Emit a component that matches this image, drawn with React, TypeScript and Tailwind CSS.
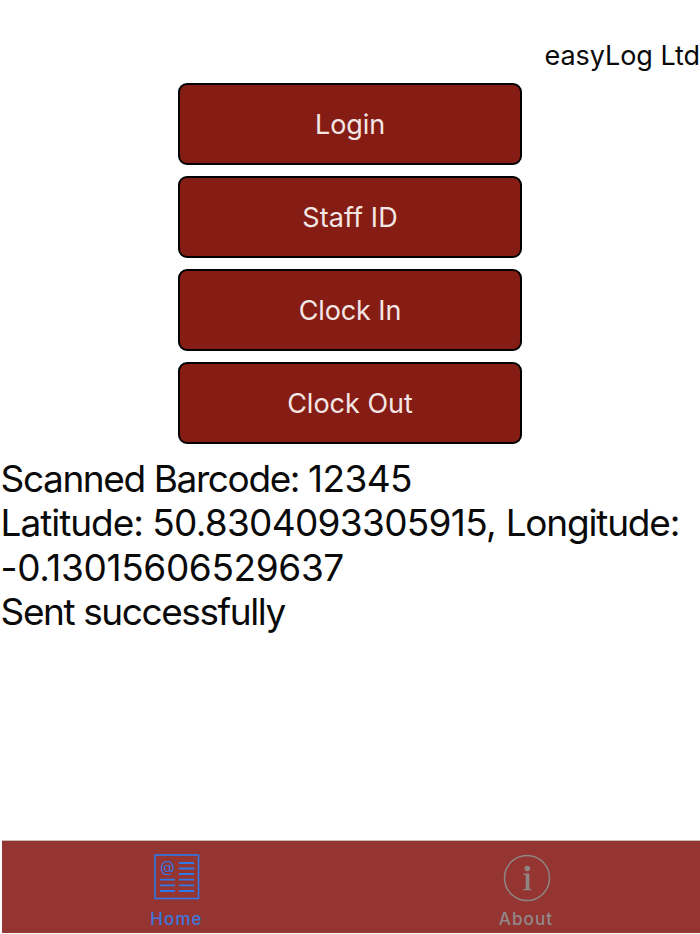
const buttons = [
  { label: 'Login', tracking: 'tracking-[-0.1px]' },
  { label: 'Staff ID', tracking: 'tracking-[0.1px]' },
  { label: 'Clock In', tracking: 'tracking-[-0.1px]' },
  { label: 'Clock Out', tracking: 'tracking-[0px]' },
];

function HomeIcon() {
  return (
    <svg width="46" height="46" viewBox="0 0 46 46" fill="none" stroke="#2f78ea" className="shrink-0">
      <rect x="1" y="1" width="43.5" height="43.5" strokeWidth="1.6" />
      <text x="6.3" y="18" fontSize="15" fill="#2f78ea" stroke="none" className="font-['Inter',sans-serif]">@</text>
      <path
        strokeWidth="1.8"
        d="M25 9h15M25 14.5h15M25 20h15M25 25.7h15M25 31.3h15M25 37h15M6 25.7h15M6 31.3h15M6 37h15"
      />
    </svg>
  );
}

function AboutIcon() {
  return (
    <svg width="48" height="48" viewBox="0 0 48 48" fill="none" className="shrink-0">
      <circle cx="24" cy="24" r="22.5" stroke="#8f8583" strokeWidth="1.5" />
      <circle cx="24.3" cy="14.5" r="2.8" fill="#8f8583" />
      <path d="M20.300 19.500h6v15.200l2.400.5v1.100h-8.600v-1.100l2.600-.5v-13.400l-2.400-.7z" fill="#8f8583" />
    </svg>
  );
}

export default function App() {
  return (
    <div className="flex h-[934px] w-[700px] flex-col overflow-hidden bg-white font-['Inter',sans-serif] text-[#0a0a0a]">
      <header className="flex h-[82px] shrink-0 justify-end pt-[39px] text-[27px] leading-[33px]">
        <span className="whitespace-nowrap tracking-[-0.05px]">easyLog Ltd</span>
      </header>

      <main className="flex grow flex-col">
        <div className="flex flex-col gap-[11.3px] pl-[178px] pt-[0.5px]">
          {buttons.map((b) => (
            <button
              key={b.label}
              className="flex h-[82px] w-[344px] items-center justify-center rounded-[9px] border-2 border-black bg-[#851d14] pt-px text-[27px] leading-[33px] text-[#f3e6e5]"
            >
              <span className={b.tracking}>{b.label}</span>
            </button>
          ))}
        </div>
        <div className="mt-[12.6px] whitespace-nowrap pl-[0.6px] text-[37px] leading-[44.4px]">
          <div>
            <span className="tracking-[-1.4px]">Scanned Barcode: </span>
            <span className="tracking-[-0.6px]">12345</span>
          </div>
          <div>
            <span className="tracking-[-1.05px]">Latitude: </span>
            <span className="tracking-[-0.7px]">50.8304093305915, </span>
            <span className="tracking-[-1.2px]">Longitude:</span>
          </div>
          <div><span className="tracking-[-0.37px]">-0.13015606529637</span></div>
          <div><span className="tracking-[-1.42px]">Sent successfully</span></div>
        </div>
      </main>

      <nav className="mb-px ml-[2px] flex h-[93px] shrink-0 border-t border-[#c9b9b8] bg-[#943532]">
        <div className="flex w-[350px] flex-col items-center pt-[13px] text-[#3d78dc]">
          <HomeIcon />
          <span className="mt-[8px] text-[17px] font-medium leading-[22px] tracking-[1.1px]">Home</span>
        </div>
        <div className="flex w-[350px] flex-col items-center pt-[12.5px] text-[#93888a]">
          <div className="pl-[3px]">
            <AboutIcon />
          </div>
          <span className="mt-[6.5px] pl-px text-[17px] font-medium leading-[22px] tracking-[1.1px]">About</span>
        </div>
      </nav>
    </div>
  );
}
